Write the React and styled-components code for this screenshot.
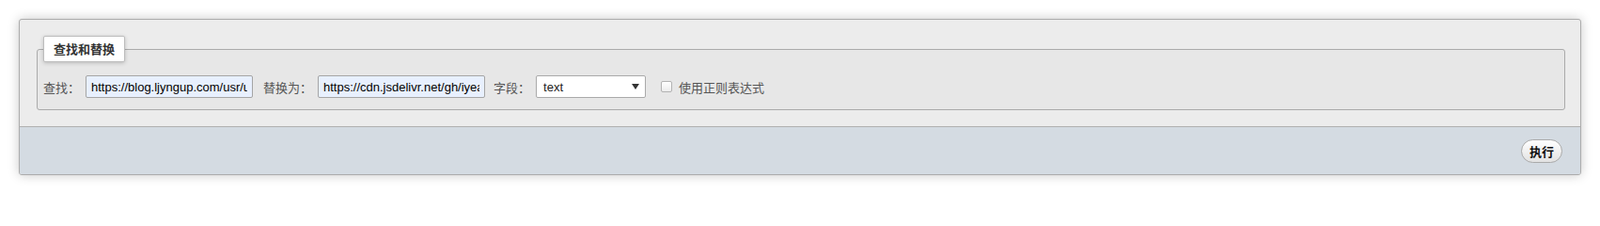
import styled, { createGlobalStyle } from "styled-components";

const GlobalStyle = createGlobalStyle`
  body {
    margin: 0;
    background: #ffffff;
    font-family: "Liberation Sans", "Noto Sans CJK SC", Arial, sans-serif;
    font-size: 13px;
  }
`;

const Panel = styled.div`
  margin: 20px;
  border: 1px solid #acacac;
  border-radius: 3px;
  background: #ececec;
  box-shadow: 0 0 12px rgba(0, 0, 0, 0.22);
  overflow: hidden;
`;

const PanelBody = styled.div`
  padding: 17px 16px 17px 18px;
`;

const Fieldset = styled.fieldset`
  margin: 0;
  padding: 0 6px 12px;
  border: 1px solid #aaaaaa;
  border-radius: 3px;
  background: #e7e7e7;
  min-width: 0;
`;

const Legend = styled.legend`
  padding: 0 10px;
  margin: 0;
  height: 26px;
  line-height: 26px;
  background: #ffffff;
  border: 1px solid #bdbdbd;
  border-radius: 2px;
  box-shadow: 0 1px 4px rgba(0, 0, 0, 0.2);
  font-family: "Noto Sans CJK SC", sans-serif;
  font-weight: bold;
  font-size: 13px;
  color: #333333;
`;

const Row = styled.div`
  display: flex;
  align-items: center;
  margin-top: 14px;
  height: 24px;
`;

const Label = styled.label`
  font-family: "Noto Sans CJK SC", sans-serif;
  font-size: 13px;
  color: #555555;
  margin-right: 6px;
  white-space: nowrap;
`;

const TextInput = styled.input`
  box-sizing: border-box;
  width: 178px;
  height: 24px;
  margin: 0 ${(p) => p.$gap || 12}px 0 0;
  padding: 0 5px;
  border: 1px solid #a5a5a5;
  border-radius: 2px;
  background: #e8f0fe;
  font-family: "Liberation Sans", Arial, sans-serif;
  font-size: 13px;
  color: #000000;
  outline: none;
`;

const SelectWrap = styled.div`
  position: relative;
  width: 117px;
  height: 24px;
  margin-right: 16px;
`;

const Select = styled.select`
  box-sizing: border-box;
  width: 100%;
  height: 100%;
  appearance: none;
  -webkit-appearance: none;
  margin: 0;
  padding: 0 20px 0 7px;
  border: 1px solid #aaaaaa;
  border-radius: 2px;
  background: #ffffff;
  font-family: "Liberation Sans", Arial, sans-serif;
  font-size: 13px;
  color: #222222;
  outline: none;
`;

const Arrow = styled.svg`
  position: absolute;
  right: 7px;
  top: 9px;
  pointer-events: none;
`;

const Check = styled.input`
  appearance: none;
  -webkit-appearance: none;
  box-sizing: border-box;
  width: 12px;
  height: 12px;
  margin: 0 7px 0 0;
  border: 1px solid #b3b3b3;
  border-radius: 2px;
  background: linear-gradient(#ffffff, #ececec);
`;

const Footer = styled.div`
  display: flex;
  justify-content: flex-end;
  align-items: center;
  height: 50px;
  padding: 0 19px;
  border-top: 1px solid #b0b0b0;
  background: #d4dbe2;
`;

const Button = styled.button`
  box-sizing: border-box;
  height: 25px;
  padding: 0 8px;
  border: 1px solid #aaaaaa;
  border-radius: 13px;
  background: linear-gradient(#ffffff, #e2e2e2);
  font-family: "Noto Sans CJK SC", sans-serif;
  font-weight: bold;
  font-size: 13px;
  color: #111111;
  cursor: pointer;
`;

export default function App() {
  return (
    <>
      <GlobalStyle />
      <Panel>
        <PanelBody>
          <Fieldset>
            <Legend>查找和替换</Legend>
            <Row>
              <Label>查找：</Label>
              <TextInput $gap={11} defaultValue="https://blog.ljyngup.com/usr/uploads/" />
              <Label>替换为：</Label>
              <TextInput $gap={9} defaultValue="https://cdn.jsdelivr.net/gh/iyeatse/blog/usr/uploads/" />
              <Label>字段：</Label>
              <SelectWrap>
                <Select defaultValue="text">
                  <option value="text">text</option>
                  <option value="title">title</option>
                </Select>
                <Arrow width="8" height="6" viewBox="0 0 8 6">
                  <path d="M0 0 H8 L4 6 Z" fill="#333" />
                </Arrow>
              </SelectWrap>
              <Check type="checkbox" id="regex" />
              <Label htmlFor="regex">使用正则表达式</Label>
            </Row>
          </Fieldset>
        </PanelBody>
        <Footer>
          <Button>执行</Button>
        </Footer>
      </Panel>
    </>
  );
}
